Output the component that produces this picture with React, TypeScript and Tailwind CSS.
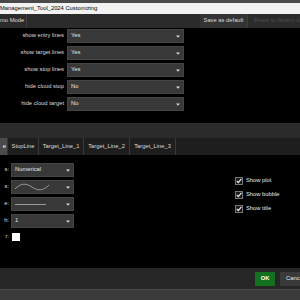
import React from "react";

const font = { fontFamily: '"Liberation Sans", Arial, sans-serif' };

const inputs = [
  { label: "show entry lines", value: "Yes" },
  { label: "show target lines", value: "Yes" },
  { label: "show stop lines", value: "Yes" },
  { label: "hide cloud stop", value: "No" },
  { label: "hide cloud target", value: "No" },
];

const tabs = [
  { name: "e", w: "w-[8px]" },
  { name: "StopLine", w: "w-[31px]" },
  { name: "Target_Line_1", w: "w-[45px]" },
  { name: "Target_Line_2", w: "w-[46px]" },
  { name: "Target_Line_3", w: "w-[46px]" },
];

const Arrow = () => (
  <svg width="4" height="3" viewBox="0 0 4 3" className="shrink-0">
    <path d="M0 0.5 L4 0.5 L2 2.8 Z" fill="#d8d8d8" />
  </svg>
);

const Select = ({ width, children }: { width: string; children: React.ReactNode }) => (
  <div className={`${width} h-[14px] bg-[#383838] border border-[#444] flex items-center justify-between pl-[3px] pr-[3px] text-[#e6e6e6]`}>
    <div className="flex items-center">{children}</div>
    <Arrow />
  </div>
);

const Check = ({ label }: { label: string }) => (
  <div className="flex items-center gap-[3px] h-[14px]">
    <svg width="8" height="8" viewBox="0 0 8 8">
      <rect x="0.5" y="0.5" width="7" height="7" fill="#1a1a1a" stroke="#777" />
      <path d="M1.8 4 L3.3 5.6 L6.4 1.8" fill="none" stroke="#f0f0f0" strokeWidth="1.2" />
    </svg>
    <span className="text-[#e6e6e6]">{label}</span>
  </div>
);

export default function App() {
  return (
    <div style={font} className="w-[300px] h-[300px] bg-black overflow-hidden flex flex-col text-[5.8px] leading-none">
      {/* Window frame + title */}
      <div className="h-[3px] bg-[#4a4a4a]" />
      <div className="h-[11px] bg-[#f2f2f2] flex items-center text-black whitespace-nowrap">
        Management_Tool_2024 Customizing
      </div>

      {/* Toolbar */}
      <div className="h-[14px] bg-[#2b2b2b] flex items-stretch text-[#dcdcdc] whitespace-nowrap">
        <div className="w-[27px] border-r border-[#3c3c3c] flex items-center">mo Mode</div>
        <div className="flex-1" />
        <div className="w-[48px] bg-[#333] border-r border-[#3c3c3c] flex items-center justify-center">Save as default</div>
        <div className="w-[52px] pl-[6px] flex items-center text-[#4e4e4e]">Reset to factory d</div>
      </div>

      {/* Inputs */}
      <div className="h-[95px] flex flex-col gap-[3px] pt-[1px]">
        {inputs.map((row) => (
          <div key={row.label} className="flex items-center gap-[3px]">
            <div className="w-[64px] text-right text-[#dcdcdc] whitespace-nowrap">{row.label}</div>
            <Select width="w-[117px]">{row.value}</Select>
          </div>
        ))}
      </div>

      {/* Splitter */}
      <div className="h-[15px] bg-[#2b2b2b]" />

      {/* Tabs */}
      <div className="h-[17px] bg-[#1e1e1e] flex items-stretch text-[#dcdcdc] whitespace-nowrap">
        {tabs.map((t, i) => (
          <div
            key={t.name}
            className={
              i === 0
                ? `${t.w} bg-[#4a4a4a] border-r border-[#333] flex items-center justify-end pr-[1px] text-white`
                : `${t.w} border-r border-[#3a3a3a] flex items-center justify-center`
            }
          >
            {t.name}
          </div>
        ))}
      </div>

      {/* Plot settings */}
      <div className="h-[113px] flex pt-[8px]">
        <div className="flex flex-col gap-[3px]">
          {["s:", "s:", "e:", "h:"].map((l, i) => (
            <div key={i} className="flex items-center gap-[2px]">
              <div className="w-[9px] text-right text-[#dcdcdc]">{l}</div>
              <Select width="w-[63px]">
                {i === 0 && <span>Numerical</span>}
                {i === 1 && (
                  <svg width="34" height="10" viewBox="0 0 34 10">
                    <path d="M0 7 C6 1, 11 1, 17 5 S28 9, 34 3" fill="none" stroke="#9a9a9a" strokeWidth="1" />
                  </svg>
                )}
                {i === 2 && <div className="w-[31px] h-[1px] bg-[#9a9a9a]" />}
                {i === 3 && <span>1</span>}
              </Select>
            </div>
          ))}
          <div className="flex items-center gap-[3px] pt-[2px]">
            <div className="w-[9px] text-right text-[#dcdcdc]">r:</div>
            <div className="w-[8px] h-[8px] bg-white" />
          </div>
        </div>
        <div className="ml-[161px] pt-[11px] flex flex-col">
          <Check label="Show plot" />
          <Check label="Show bubble" />
          <Check label="Show title" />
        </div>
      </div>

      {/* Footer */}
      <div className="h-[21px] bg-[#262626] flex items-center justify-end gap-[5px]">
        <div className="w-[20px] h-[14px] bg-[#13701f] text-white font-bold flex items-center justify-center">OK</div>
        <div className="w-[20px] h-[14px] bg-[#3a3a3a] text-[#e6e6e6] overflow-hidden flex items-center pl-[6px] whitespace-nowrap">Canc</div>
      </div>
      <div className="flex-1 bg-[#3b3b3b] border-t border-[#4a4a4a]" />
    </div>
  );
}
